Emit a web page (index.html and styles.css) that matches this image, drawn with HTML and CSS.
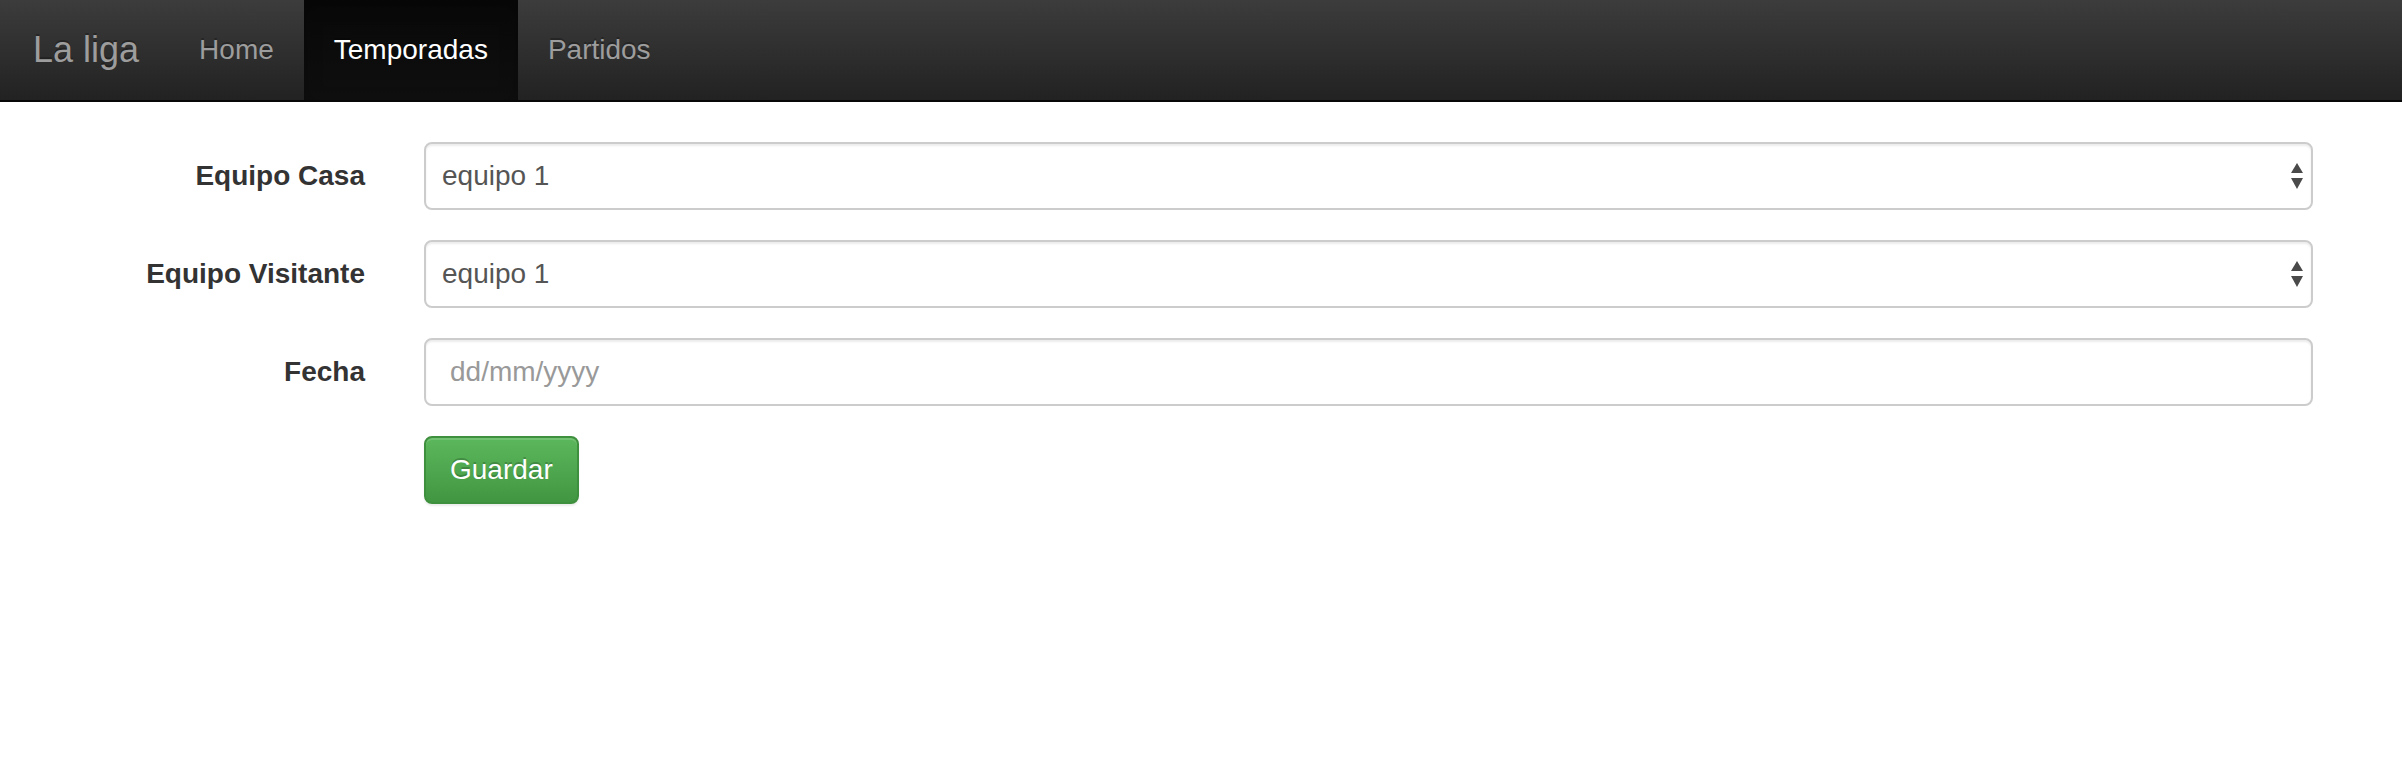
FILE: index.html
```html
<!DOCTYPE html>
<html lang="es">
<head>
<meta charset="utf-8">
<title>La liga</title>
<link rel="stylesheet" href="styles.css">
</head>
<body>
<nav class="navbar">
  <a class="brand" href="#">La liga</a>
  <ul class="nav">
    <li class="nav-item"><a class="nav-link" href="#">Home</a></li>
    <li class="nav-item active"><a class="nav-link" href="#">Temporadas</a></li>
    <li class="nav-item"><a class="nav-link" href="#">Partidos</a></li>
  </ul>
</nav>
<main class="content">
  <form class="form">
    <div class="group">
      <label class="label" for="casa">Equipo Casa</label>
      <div class="select-wrap">
        <select class="field select" id="casa"><option>equipo 1</option></select>
        <svg class="arrows" width="12" height="26" viewBox="0 0 12 26"><path d="M6 0 L12 10 L0 10 Z" fill="#4a4a4a"/><path d="M0 15 L12 15 L6 26 Z" fill="#4a4a4a"/></svg>
      </div>
    </div>
    <div class="group">
      <label class="label" for="visitante">Equipo Visitante</label>
      <div class="select-wrap">
        <select class="field select" id="visitante"><option>equipo 1</option></select>
        <svg class="arrows" width="12" height="26" viewBox="0 0 12 26"><path d="M6 0 L12 10 L0 10 Z" fill="#4a4a4a"/><path d="M0 15 L12 15 L6 26 Z" fill="#4a4a4a"/></svg>
      </div>
    </div>
    <div class="group">
      <label class="label" for="fecha">Fecha</label>
      <div class="control">
        <input class="field input" id="fecha" type="text" placeholder="dd/mm/yyyy">
      </div>
    </div>
    <div class="group">
      <div></div>
      <div class="control">
        <button class="btn" type="button">Guardar</button>
      </div>
    </div>
  </form>
</main>
</body>
</html>
```
FILE: styles.css
```css
* { box-sizing: border-box; }
html, body { margin: 0; padding: 0; background: #fff; }
body {
  font-family: "Liberation Sans", Arial, Helvetica, sans-serif;
  font-size: 28px;
  line-height: 40px;
  color: #333;
}

.navbar {
  display: flex;
  align-items: stretch;
  height: 102px;
  background: linear-gradient(to bottom, #3c3c3c 0%, #222222 100%);
  border-bottom: 2px solid #080808;
}
.brand {
  display: block;
  padding: 30px 30px 30px 33px;
  font-size: 36px;
  line-height: 40px;
  color: #9d9d9d;
  text-decoration: none;
  text-shadow: 0 -2px 0 rgba(0,0,0,0.25);
}
.nav {
  display: flex;
  list-style: none;
  margin: 0;
  padding: 0;
}
.nav-item { display: block; }
.nav-link {
  display: block;
  padding: 30px;
  font-size: 28px;
  line-height: 40px;
  color: #9d9d9d;
  text-decoration: none;
  text-shadow: 0 -2px 0 rgba(0,0,0,0.25);
}
.nav-item.active .nav-link {
  color: #fff;
  background: linear-gradient(to bottom, #080808 0%, #0f0f0f 100%);
  box-shadow: inset 0 6px 18px rgba(0,0,0,0.25);
}

.content { padding-top: 40px; }
.form { width: 2313px; }
.group {
  display: grid;
  grid-template-columns: 365px 1fr;
  column-gap: 59px;
  margin-bottom: 30px;
}
.label {
  padding-top: 14px;
  text-align: right;
  font-weight: bold;
  font-size: 28px;
  line-height: 40px;
  color: #333;
}
.select-wrap { position: relative; }
.field {
  display: block;
  width: 100%;
  height: 68px;
  font-family: inherit;
  font-size: 28px;
  line-height: 40px;
  color: #555;
  background: #fff;
  border: 2px solid #ccc;
  border-radius: 8px;
  box-shadow: inset 0 2px 2px rgba(0,0,0,0.075);
  margin: 0;
  outline: none;
}
.select {
  -webkit-appearance: none;
  appearance: none;
  padding: 0 40px 0 16px;
}
.input { padding: 12px 24px; }
.input::placeholder { color: #999; opacity: 1; }
.arrows {
  position: absolute;
  right: 10px;
  top: 21px;
  pointer-events: none;
}
.btn {
  display: inline-block;
  height: 68px;
  padding: 12px 24px;
  font-family: inherit;
  font-size: 28px;
  line-height: 40px;
  color: #fff;
  background: linear-gradient(to bottom, #5cb85c 0%, #419641 100%);
  border: 2px solid #3e8f3e;
  border-radius: 8px;
  text-shadow: 0 -2px 0 rgba(0,0,0,0.2);
  box-shadow: inset 0 2px 0 rgba(255,255,255,0.15), 0 2px 2px rgba(0,0,0,0.075);
  cursor: pointer;
}
```
